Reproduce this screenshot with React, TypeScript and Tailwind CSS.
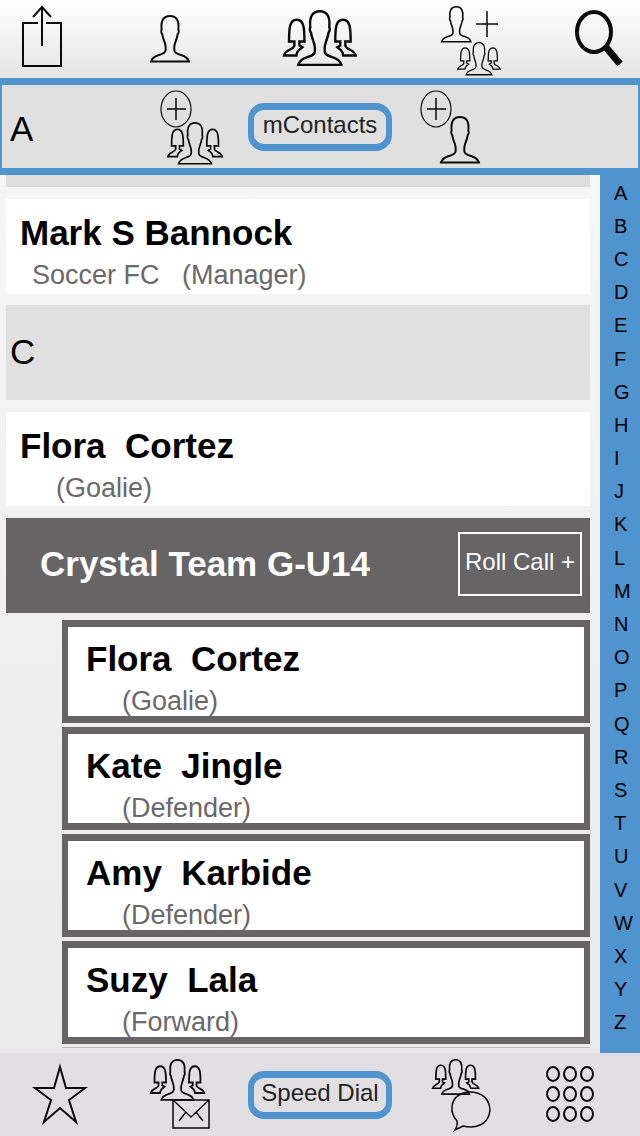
import type { ReactNode } from "react";

interface Contact {
  name: string;
  role: string;
  club?: string;
}

const teamMembers: Contact[] = [
  { name: "Flora  Cortez", role: "(Goalie)" },
  { name: "Kate  Jingle", role: "(Defender)" },
  { name: "Amy  Karbide", role: "(Defender)" },
  { name: "Suzy  Lala", role: "(Forward)" },
];

const letters = "ABCDEFGHIJKLMNOPQRSTUVWXYZ".split("");

// 120 x 142 bust outline, reused at several sizes
const PERSON =
  "M3 140C6 129 14 124 27 120C41 116 47 113 47 105L47 95C46 82 39 74 37 58C33 54 33 46 35 44C32 18 40 3 60 3C80 3 88 18 85 44C87 46 87 54 83 58C81 74 74 82 73 95L73 105C73 113 79 116 93 120C106 124 114 129 117 140Z";

const SIDE =
  "M18 94C18 52 20 29 41 29C62 29 64 52 64 94L49 94L49 106L58 111L48 119C43 123 41 128 40 136L3 136C8 117 28 121 34 107L34 94Z";

const Person = ({ transform, width = 2 }: { transform: string; width?: number }) => (
  <g transform={transform} strokeWidth={width}>
    <path d={PERSON} vectorEffect="non-scaling-stroke" />
  </g>
);

// 220 x 168 group: one bust in front, two smaller behind
const People = ({ transform, width = 2 }: { transform: string; width?: number }) => (
  <g transform={transform} strokeWidth={width}>
    <path d={SIDE} vectorEffect="non-scaling-stroke" />
    <path d={SIDE} transform="matrix(-1 0 0 1 220 0)" vectorEffect="non-scaling-stroke" />
    <path d={PERSON} transform="translate(42 0) scale(1.13 1.17)" vectorEffect="non-scaling-stroke" />
  </g>
);

interface IconButtonProps {
  label: string;
  width: number;
  height: number;
  children: ReactNode;
}

const IconButton = ({ label, width, height, children }: IconButtonProps) => (
  <button type="button" aria-label={label} className="cursor-pointer">
    <svg
      width={width}
      height={height}
      viewBox={`0 0 ${width} ${height}`}
      fill="none"
      stroke="#0a0a0a"
      strokeWidth="2"
      className="block overflow-visible"
    >
      {children}
    </svg>
  </button>
);

const PillButton = ({ children }: { children: ReactNode }) => (
  <button
    type="button"
    className="h-12 w-36 rounded-2xl border-x-6 border-y-7 border-[#4f94cf] pb-1 text-2xl leading-7 whitespace-nowrap text-[#222]"
  >
    {children}
  </button>
);

const ContactText = ({ name, role, club }: Contact) => (
  <>
    <h2 className="text-[35px] leading-11 font-bold whitespace-pre text-black">{name}</h2>
    <p className={`text-[27px] leading-10 whitespace-pre text-[#6a6869] ${club ? "pl-3" : "pl-9"}`}>
      {club ? `${club}   ${role}` : role}
    </p>
  </>
);

const TopBar = () => (
  <nav className="grid h-[78px] grid-cols-[84fr_172fr_128fr_174fr_82fr] items-center justify-items-center bg-linear-to-b from-white to-[#e6e5e5] pb-1">
    <IconButton label="Share" width={40} height={64}>
      <path d="M16 17H1V60H39V17H24M20 40V1M11 11L20 1L29 11" />
    </IconButton>
    <IconButton label="Contacts" width={40} height={48}>
      <Person transform="translate(0 1) scale(0.333)" />
    </IconButton>
    <IconButton label="Groups" width={74} height={56}>
      <People transform="scale(0.335)" width={2.4} />
    </IconButton>
    <IconButton label="Add contact to group" width={60} height={76}>
      <Person transform="translate(0 6) scale(0.255)" width={1.6} />
      <path d="M35 24H57M46 11V37" strokeWidth="1.5" />
      <People transform="translate(16 42) scale(0.2)" width={1.3} />
    </IconButton>
    <IconButton label="Search" width={50} height={60}>
      <ellipse cx="20" cy="24" rx="17" ry="20" strokeWidth="4" />
      <path d="M31 38L46 56" strokeWidth="7" />
    </IconButton>
  </nav>
);

const SectionBar = () => (
  <header className="grid h-[97px] grid-cols-[134fr_112fr_144fr_118fr_128fr] items-center justify-items-center border-x-2 border-y-7 border-[#4f94cf] bg-[#e1e0e0]">
    <h2 className="justify-self-start pt-1 pl-2 text-[35px] leading-10 text-black">A</h2>
    <IconButton label="Add group" width={62} height={76}>
      <ellipse cx="15" cy="20" rx="15" ry="18" strokeWidth="1.2" />
      <path d="M6 20H25M15 9V31" strokeWidth="1.5" />
      <People transform="translate(6 33) scale(0.255)" width={1.7} />
    </IconButton>
    <PillButton>mContacts</PillButton>
    <IconButton label="Add contact" width={60} height={76}>
      <ellipse cx="15" cy="20" rx="15" ry="18" strokeWidth="1.2" />
      <path d="M6 20H25M15 9V31" strokeWidth="1.5" />
      <Person transform="translate(19 27) scale(0.333)" />
    </IconButton>
  </header>
);

const ContactList = () => (
  <main className="flex-1 bg-linear-to-b from-[#f7f6f6] to-[#ebeaea] pr-2.5 pl-1.5">
    <div className="h-3 bg-[#dfdede]" />
    <div className="mt-3 h-[95px] bg-white px-3.5 pt-3">
      <ContactText name="Mark S Bannock" club="Soccer FC" role="(Manager)" />
    </div>
    <h2 className="mt-[11px] flex h-[95px] items-center bg-[#e1e0e0] px-1 text-[35px] text-black">C</h2>
    <div className="mt-3 h-[94px] bg-white px-3.5 pt-3">
      <ContactText name="Flora  Cortez" role="(Goalie)" />
    </div>
    <section>
      <div className="mt-3 flex h-[95px] items-center justify-between bg-[#666465] pr-2 pb-1 pl-8.5">
        <h2 className="text-[35px] leading-11 font-bold whitespace-nowrap text-white">Crystal Team G-U14</h2>
        <button
          type="button"
          className="h-16 w-[124px] border-2 border-white pb-1 text-2xl whitespace-nowrap text-white"
        >
          Roll Call +
        </button>
      </div>
      <ul className="mt-[7px] ml-14 flex flex-col gap-1 border-b border-[#bbb] pb-[3px]">
        {teamMembers.map((member) => (
          <li key={member.name} className="h-[103px] border-x-6 border-y-7 border-[#666465] bg-white px-[18px] pt-2.5">
            <ContactText {...member} />
          </li>
        ))}
      </ul>
    </section>
  </main>
);

const LetterIndex = () => (
  <nav aria-label="Alphabet" className="flex w-10 flex-col bg-[#4f94cf] pt-px pb-3.5">
    {letters.map((letter) => (
      <a key={letter} href={`#${letter}`} className="flex flex-1 items-center pl-3.5 text-xl leading-6 text-black">
        {letter}
      </a>
    ))}
  </nav>
);

const BottomBar = () => (
  <nav className="grid h-[83px] grid-cols-[120fr_120fr_160fr_122fr_96fr] items-center justify-items-center bg-[#e1dfe1] pr-[22px]">
    <IconButton label="Favourites" width={54} height={60}>
      <path d="M27 2L33 23H52L36 35L43 57L27 43L11 57L18 35L2 23H21Z" />
    </IconButton>
    <IconButton label="Message group" width={60} height={72}>
      <People transform="scale(0.25)" width={1.8} />
      <path d="M23 41H59V69H23ZM23 41L41 58L59 41M36 53L29 62M46 53L53 62" strokeWidth="1.5" />
    </IconButton>
    <PillButton>Speed Dial</PillButton>
    <IconButton label="Group chat" width={58} height={74}>
      <People transform="translate(0 1) scale(0.215)" width={1.7} />
      <path
        d="M25 63C17 54 19 42 27 37C35 32 49 33 55 42C61 52 57 63 48 67C42 70 35 69 31 68L23 72C25 69 26 67 25 63Z"
        strokeWidth="1.5"
      />
    </IconButton>
    <IconButton label="Keypad" width={50} height={60}>
      {[9, 29, 49].map((cy) =>
        [8, 25, 42].map((cx) => <ellipse key={`${cx}-${cy}`} cx={cx} cy={cy} rx="6" ry="7" />),
      )}
    </IconButton>
  </nav>
);

export default function App() {
  return (
    <div className="flex min-h-screen flex-col font-['Liberation_Sans',Arial,sans-serif]">
      <TopBar />
      <SectionBar />
      <div className="flex flex-1">
        <ContactList />
        <LetterIndex />
      </div>
      <BottomBar />
    </div>
  );
}
